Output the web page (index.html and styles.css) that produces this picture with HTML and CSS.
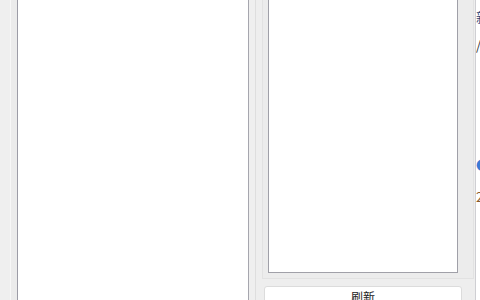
FILE: index.html
```html
<!DOCTYPE html>
<html lang="zh-CN">
<head>
    <meta charset="UTF-8">
    <title>刷新</title>
    <link rel="stylesheet" href="styles.css">
</head>
<body>
    <div class="window">
        <div class="left-frame">
            <div class="file-list"></div>
        </div>

        <div class="side">
            <div class="side-frame">
                <div class="group">
                    <div class="item-list"></div>
                </div>
                <button type="button" class="refresh-btn">刷新</button>
            </div>
        </div>

        <div class="detail">
            <p class="line title">新闻标题</p>
            <p class="line path">/api/list</p>
            <p class="line tag">● 标签</p>
            <p class="line date">2024-05-01</p>
        </div>
    </div>
</body>
</html>
```

FILE: styles.css
```css
body {
    margin: 0;
    font-family: "Noto Sans CJK SC", "Noto Sans", sans-serif;
    background: #efefef;
    overflow: hidden;
}
.window {
    display: flex;
    height: 300px;
    width: 480px;
    background: #efefef;
}
.left-frame {
    margin-left: 10px;
    padding-left: 6px;
    border-left: 1px solid #f7f7f7;
    background: #ebebeb;
    display: flex;
}
.file-list {
    width: 230px;
    background: #fff;
    border-left: 1px solid #9c9ca6;
    border-right: 1px solid #a6a6ae;
}
.side {
    padding-left: 6px;
    display: flex;
}
.side-frame {
    width: 219px;
    border-left: 1px solid #dedede;
    border-right: 1px solid #cfcfd3;
    background: #eeeeee;
    display: flex;
    flex-direction: column;
}
.group {
    margin-left: 6px;
    width: 200px;
    height: 272px;
    padding: 0 5px 6px 5px;
    border: 1px solid #e2e2e2;
    border-top: none;
    background: #ececec;
}
.item-list {
    width: 188px;
    height: 272px;
    background: #fff;
    border: 1px solid #a0a0a8;
    border-top: none;
}
.refresh-btn {
    margin: 7px 0 0 8px;
    width: 198px;
    height: 24px;
    background: #fff;
    border: 1px solid #dcdcdc;
    border-radius: 3px;
    font-family: "Noto Sans CJK SC", sans-serif;
    font-size: 12px;
    color: #222;
    padding: 0;
    line-height: 20px;
}
.detail {
    flex: 1;
    background: #fff;
    overflow: hidden;
    white-space: nowrap;
}
.line {
    margin: 0;
    font-size: 13px;
    line-height: 14px;
}
.title {
    margin-top: 10px;
    color: #2c3e70;
}
.path {
    margin-top: 14px;
    color: #333;
}
.tag {
    margin-top: 106px;
    color: #3a7bd5;
}
.date {
    margin-top: 18px;
    color: #8a5a2b;
}
```
